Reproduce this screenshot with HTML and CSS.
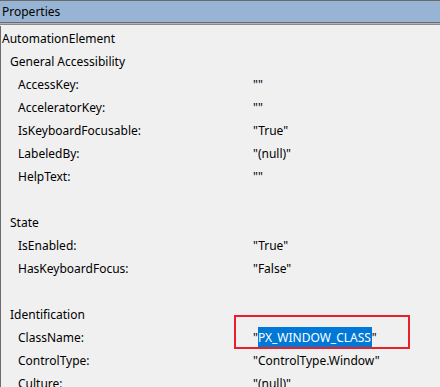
FILE: index.html
```html
<!DOCTYPE html>
<html>
<head>
    <link rel="stylesheet" href="styles.css">
</head>
<body>
    <div class="panel">
        <div class="panel-title">Properties</div>
        <div class="tree">
            <div class="row lvl0"><span class="label">AutomationElement</span></div>
            <div class="row lvl1"><span class="label">General Accessibility</span></div>
            <div class="row lvl2"><span class="label">AccessKey:</span><span class="value">""</span></div>
            <div class="row lvl2"><span class="label">AcceleratorKey:</span><span class="value">""</span></div>
            <div class="row lvl2"><span class="label">IsKeyboardFocusable:</span><span class="value">"True"</span></div>
            <div class="row lvl2"><span class="label">LabeledBy:</span><span class="value">"(null)"</span></div>
            <div class="row lvl2"><span class="label">HelpText:</span><span class="value">""</span></div>
            <div class="row"></div>
            <div class="row lvl1"><span class="label">State</span></div>
            <div class="row lvl2"><span class="label">IsEnabled:</span><span class="value">"True"</span></div>
            <div class="row lvl2"><span class="label">HasKeyboardFocus:</span><span class="value">"False"</span></div>
            <div class="row"></div>
            <div class="row lvl1"><span class="label">Identification</span></div>
            <div class="row lvl2 marked">
                <span class="label">ClassName:</span>
                <span class="value">"<span class="selected">PX_WINDOW_CLASS</span>"</span>
                <div class="mark-box"></div>
            </div>
            <div class="row lvl2"><span class="label">ControlType:</span><span class="value">"ControlType.Window"</span></div>
            <div class="row lvl2 last"><span class="label">Culture:</span><span class="value">"(null)"</span></div>
        </div>
    </div>
</body>
</html>
```

FILE: styles.css
```css
html, body {
    margin: 0;
    height: 100%;
    overflow: hidden;
    background: #f0f0f0;
}

.panel {
    font-family: "Noto Sans", sans-serif;
    font-size: 12px;
    color: #000;
    height: 387px;
    display: flex;
    flex-direction: column;
    overflow: hidden;
}

.panel-title {
    height: 21px;
    line-height: 21px;
    padding-left: 2px;
    background: #98b4d4;
    border-top: 1px solid #6b6b6b;
    border-bottom: 1px solid #6b6b6b;
    box-shadow: 0 1px 0 #b4b4b4, 0 2px 0 #8a8a8a;
    margin-bottom: 3px;
    flex: none;
}

.tree {
    flex: 1;
    border-left: 1px solid #6b6b6b;
    padding-top: 1px;
}

.row {
    position: relative;
    display: grid;
    grid-template-columns: 252px 1fr;
    height: 23px;
    line-height: 23px;
    white-space: nowrap;
}

/* last row is clipped by the window, as in the screenshot */
.row.last {
    height: 15px;
    line-height: 15px;
    padding-top: 4px;
    overflow: hidden;
}

.lvl0 .label { padding-left: 1px; }
.lvl1 .label { padding-left: 9px; }
.lvl2 .label { padding-left: 17px; }

.selected {
    background: #0078d7;
    color: #fff;
    padding: 2px 1px 2px 0;
}

.mark-box {
    position: absolute;
    left: 233px;
    top: -11px;
    width: 172px;
    height: 30px;
    border: 2px solid #e8202a;
}
```
